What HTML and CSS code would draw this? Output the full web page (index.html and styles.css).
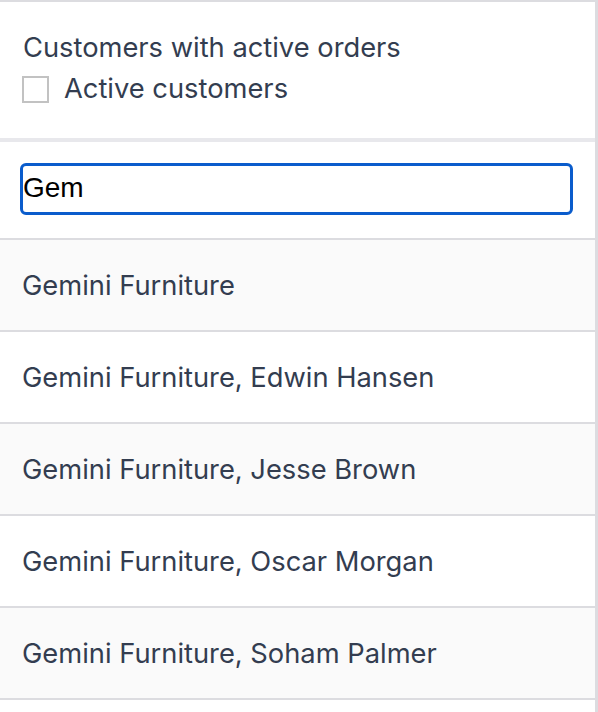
FILE: index.html
```html
<!DOCTYPE html>
<html>
<head>
<meta charset="utf-8">
<link rel="stylesheet" href="styles.css">
</head>
<body>
<div class="panel">
  <div class="filters">
    <div class="filter-title">Customers with active orders</div>
    <label class="check-row">
      <span class="checkbox"></span>
      <span class="check-label">Active customers</span>
    </label>
  </div>
  <div class="search">
    <input class="search-input" type="text" value="Gem">
  </div>
  <ul class="results">
    <li class="row alt">Gemini Furniture</li>
    <li class="row">Gemini Furniture, Edwin Hansen</li>
    <li class="row alt">Gemini Furniture, Jesse Brown</li>
    <li class="row">Gemini Furniture, Oscar Morgan</li>
    <li class="row alt">Gemini Furniture, Soham Palmer</li>
    <li class="row"></li>
  </ul>
</div>
</body>
</html>
```
FILE: styles.css
```css
html, body {
  margin: 0;
  padding: 0;
  background: #ffffff;
}
.panel {
  width: 595px;
  height: 712px;
  border-top: 2px solid #dcdce0;
  border-right: 3px solid #dcdce0;
  overflow: hidden;
  font-family: Inter, "Noto Sans", sans-serif;
  color: #333d50;
}
.filters {
  height: 140px;
  box-sizing: border-box;
  padding: 29px 22px 0 22px;
  border-bottom: 4px solid #e8e8ec;
}
.filter-title {
  font-size: 27.3px;
  line-height: 32px;
  padding-left: 1px;
  margin-top: 1px;
}
.check-row {
  display: flex;
  align-items: center;
  gap: 15px;
  margin-top: 9px;
}
.checkbox {
  width: 23px;
  height: 23px;
  border: 2px solid #c2c2c2;
  background: #fff;
  flex: none;
}
.check-label {
  font-size: 27.3px;
  line-height: 32px;
}
.search {
  height: 98px;
  box-sizing: border-box;
  padding: 21px 22px 0 20px;
  border-bottom: 2px solid #dcdce0;
}
.search-input {
  display: block;
  width: 100%;
  height: 52px;
  box-sizing: border-box;
  margin: 0;
  border: 3px solid #0a5ccc;
  border-radius: 6px;
  padding: 0 0 2px 0;
  font-family: "Liberation Sans", Arial, sans-serif;
  font-size: 28px;
  color: #000;
  outline: none;
  background: #fff;
}
.results {
  list-style: none;
  margin: 0;
  padding: 0;
}
.row {
  height: 92px;
  box-sizing: border-box;
  border-bottom: 2px solid #dcdce0;
  display: flex;
  align-items: center;
  padding-left: 22px;
  font-size: 27.3px;
  background: #ffffff;
}
.row.alt {
  background: #fafafa;
}
```
